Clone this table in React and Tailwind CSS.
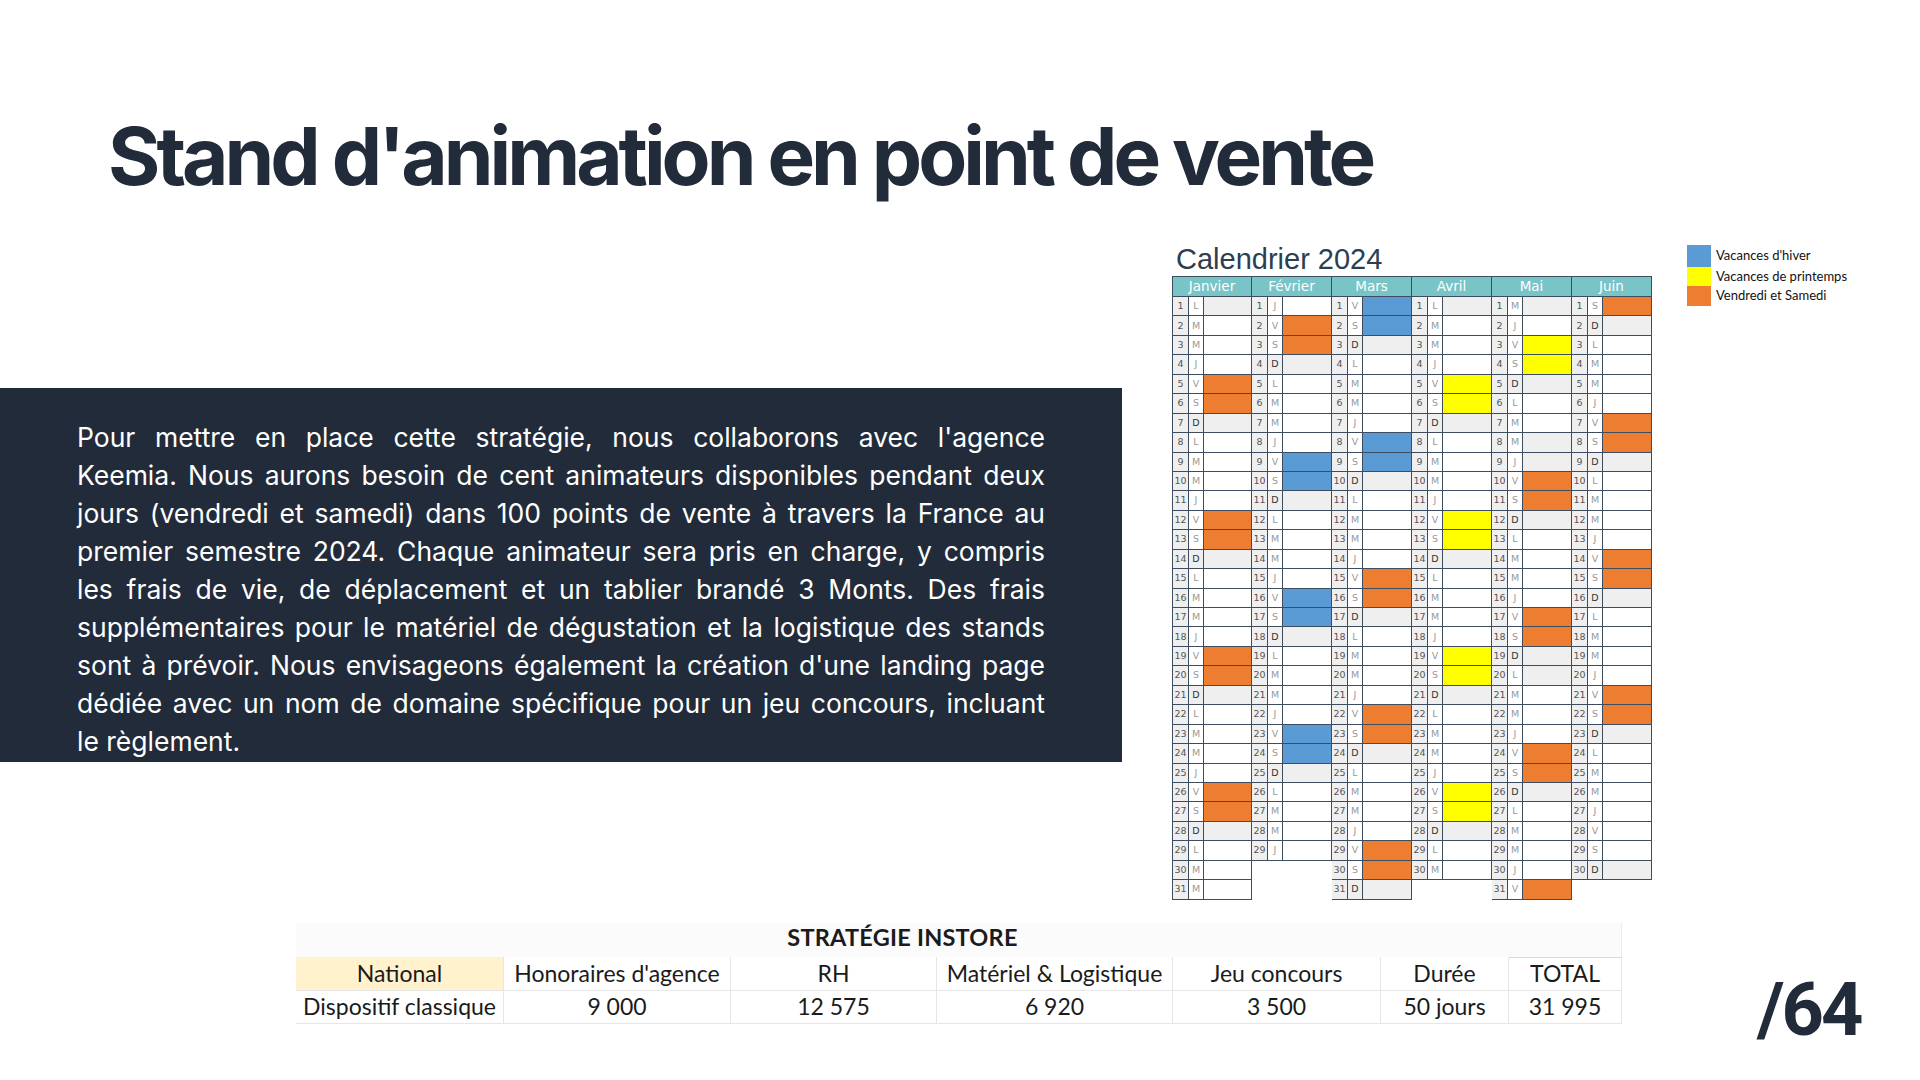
const LETTERS = ['D', 'L', 'M', 'M', 'J', 'V', 'S']

const MONTHS = [
  { name: 'Janvier', orange: [5, 6, 12, 13, 19, 20, 26, 27] },
  { name: 'Février', orange: [2, 3], blue: [9, 10, 16, 17, 23, 24] },
  { name: 'Mars', blue: [1, 2, 8, 9], orange: [15, 16, 22, 23, 29, 30] },
  { name: 'Avril', yellow: [5, 6, 12, 13, 19, 20, 26, 27] },
  { name: 'Mai', yellow: [3, 4], orange: [10, 11, 17, 18, 24, 25, 31] },
  { name: 'Juin', orange: [1, 7, 8, 14, 15, 21, 22] },
]

// jours fériés
const HOLIDAYS = { 0: [1], 3: [1], 4: [1, 8, 9, 20] }

function buildDays(m) {
  const count = new Date(2024, m + 1, 0).getDate()
  const info = MONTHS[m]
  const days = []
  for (let d = 1; d <= count; d++) {
    const wd = new Date(2024, m, d).getDay()
    let fill = 'bg-white'
    if (wd === 0 || (HOLIDAYS[m] || []).includes(d)) fill = 'bg-[#efefef]'
    if ((info.orange || []).includes(d)) fill = 'bg-[#ed7d31]'
    if ((info.blue || []).includes(d)) fill = 'bg-[#5b9bd5]'
    if ((info.yellow || []).includes(d)) fill = 'bg-[#ffff00]'
    days.push({ d, letter: LETTERS[wd], sunday: wd === 0, fill })
  }
  return days
}

function Month({ index }) {
  const days = buildDays(index)
  return (
    <div className={`w-[80px] flex flex-col border-r border-[#3d4c5e] ${index === 0 ? 'border-l' : ''}`}>
      <div className="h-[21px] bg-[#78c4c6] border-t border-b border-[#3d4c5e] flex items-center justify-center text-white text-[13.5px]">
        {MONTHS[index].name}
      </div>
      {days.map((day) => (
        <div key={day.d} className="h-[19.45px] flex border-b border-[#3d4c5e] text-[9.5px]">
          <div className="w-[16px] bg-[#efefef] border-r border-[#3d4c5e] flex items-center justify-center text-[#555]">
            {day.d}
          </div>
          <div className={`w-[15px] border-r border-[#3d4c5e] flex items-center justify-center ${day.sunday ? 'bg-[#efefef] text-[#333]' : 'bg-white text-[#999]'}`}>
            {day.letter}
          </div>
          <div className={`flex-1 ${day.fill}`}></div>
        </div>
      ))}
    </div>
  )
}

function Legend() {
  const items = [
    ['bg-[#5b9bd5]', "Vacances d'hiver", 'h-[22px]'],
    ['bg-[#ffff00]', 'Vacances de printemps', 'h-[19px]'],
    ['bg-[#ed7d31]', 'Vendredi et Samedi', 'h-[20px]'],
  ]
  return (
    <div className="flex flex-col font-['Lato',sans-serif] text-[13px] text-[#111]">
      {items.map(([c, label, h]) => (
        <div key={label} className={`flex items-center ${h}`}>
          <div className={`w-[24px] h-full ${c}`}></div>
          <span className="ml-[5px]">{label}</span>
        </div>
      ))}
    </div>
  )
}

const LINES = [
  "Pour mettre en place cette stratégie, nous collaborons avec l'agence",
  'Keemia. Nous aurons besoin de cent animateurs disponibles pendant deux',
  'jours (vendredi et samedi) dans 100 points de vente à travers la France au',
  'premier semestre 2024. Chaque animateur sera pris en charge, y compris',
  'les frais de vie, de déplacement et un tablier brandé 3 Monts. Des frais',
  'supplémentaires pour le matériel de dégustation et la logistique des stands',
  "sont à prévoir. Nous envisageons également la création d'une landing page",
  "dédiée avec un nom de domaine spécifique pour un jeu concours, incluant",
]

const COLS = ['National', "Honoraires d'agence", 'RH', 'Matériel & Logistique', 'Jeu concours', 'Durée', 'TOTAL']
const VALUES = ['Dispositif classique', '9 000', '12 575', '6 920', '3 500', '50 jours', '31 995']

function Strategy() {
  return (
    <div className="grid grid-cols-[208px_227px_206px_236px_208px_128px_113px] font-['Lato',sans-serif] text-[#1b1b1b] text-[23px]">
      <div className="col-span-6 h-[34px] bg-[#fbfbfb] flex items-end justify-center pb-[1px] font-bold text-[23.5px] tracking-[0.01em]">
        STRATÉGIE INSTORE
      </div>
      <div className="h-[34px] bg-[#fbfbfb] border-r border-[#ececec]"></div>
      {COLS.map((c, i) => (
        <div
          key={c}
          className={`h-[34px] flex items-center justify-center border-r border-b border-[#e6e6e6] ${i === 0 ? 'bg-[#fff2cc]' : 'bg-white'} ${i === 6 ? 'border-t border-t-[#d9d9d9]' : ''}`}
        >
          {c}
        </div>
      ))}
      {VALUES.map((v, i) => (
        <div key={i} className="h-[33px] flex items-center justify-center border-r border-b border-[#e6e6e6] bg-white">
          {v}
        </div>
      ))}
    </div>
  )
}

export default function App() {
  return (
    <div className="w-[1920px] h-[1080px] bg-white overflow-hidden">
      <h1 className="pl-[108px] pt-[106px] h-[238px] font-['Inter',sans-serif] font-bold text-[80px] leading-[100px] tracking-[-0.05em] text-[#222b3a]">
        Stand d'animation en point de vente
      </h1>

      <div className="flex items-start">
        <div className="w-[1122px] mt-[150px] bg-[#222b3a] pl-[77px] pr-[77px] pt-[30px] pb-[2px] font-['Inter',sans-serif] text-white text-[26.5px] leading-[38px]">
          {LINES.map((l) => (
            <span key={l} className="block text-justify [text-align-last:justify]">{l}</span>
          ))}
          <span className="block">le règlement.</span>
        </div>

        <div className="ml-[50px] mt-[4px] flex flex-col font-['DejaVu_Sans',sans-serif]">
          <div className="h-[34px] pl-[4px] flex items-end font-['Liberation_Sans',sans-serif] text-[29px] leading-[34px] text-[#2c3e50]">
            Calendrier 2024
          </div>
          <div className="flex items-start">
            {MONTHS.map((m, i) => (
              <Month key={m.name} index={i} />
            ))}
          </div>
        </div>

        <div className="ml-[35px] mt-[7px]">
          <Legend />
        </div>
      </div>

      <div className="flex items-start mt-[23px]">
        <div className="ml-[296px]">
          <Strategy />
        </div>
        <div className="ml-[135px] mt-[52px] font-['Roboto',sans-serif] font-bold text-[74px] leading-[70px] tracking-[-0.04em] text-[#222b3a]">
          /64
        </div>
      </div>
    </div>
  )
}
